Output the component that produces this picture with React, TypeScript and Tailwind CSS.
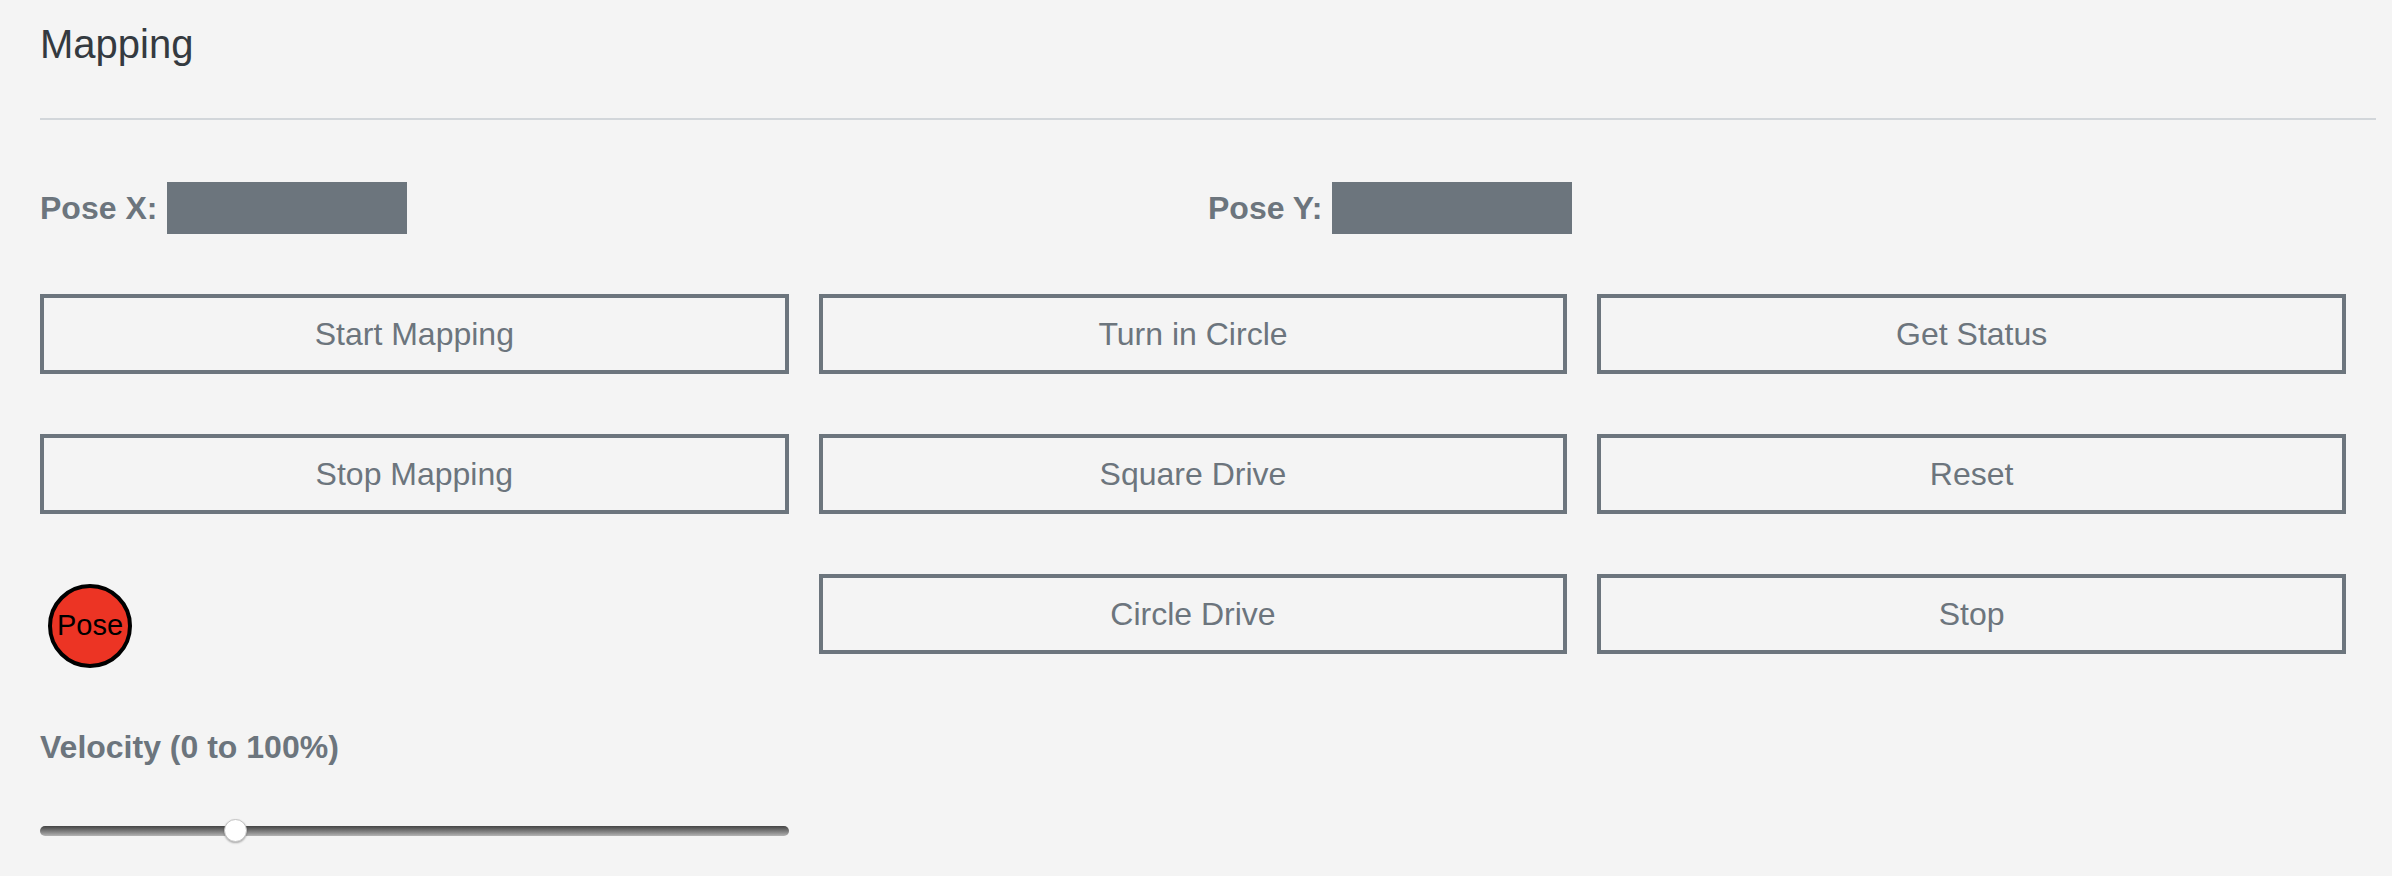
import { useState } from 'react'

const font = { fontFamily: '"Liberation Sans", Arial, sans-serif' }

function ActionButton({ label }: { label: string }) {
  return (
    <button className="mr-[30px] h-[80px] border-4 border-[#6c757d] bg-transparent text-[32px] text-[#6c757d]">
      {label}
    </button>
  )
}

function PoseField({ label }: { label: string }) {
  return (
    <div className="flex items-center">
      <span className="text-[32px] font-bold leading-[38px] text-[#6c757d]">{label}</span>
      <div className="ml-[10px] h-[52px] w-[240px] bg-[#6c757d]" />
    </div>
  )
}

function VelocitySlider({ value }: { value: number }) {
  const pct = value / 100
  return (
    <div className="relative mt-[53px] h-[24px] w-full">
      <div className="absolute left-0 right-0 top-[7px] h-[10px] rounded-full bg-gradient-to-b from-[#444444] to-[#b4b4b4]" />
      <div
        className="absolute top-0 h-[23px] w-[23px] rounded-full border border-[#c4c4c4] bg-white shadow-[0_1px_2px_rgba(0,0,0,0.3)]"
        style={{ left: `calc((100% - 23px) * ${pct})` }}
      />
    </div>
  )
}

export default function App() {
  const [velocity] = useState(25.3)

  return (
    <div className="min-h-screen bg-[#f4f4f4] pl-[40px] pr-[16px] pt-[20px]" style={font}>
      <h1 className="text-[40px] font-normal leading-[48px] text-[#343a40]">Mapping</h1>
      <hr className="mt-[50px] border-t-2 border-[#d2d6da]" />

      <div className="mt-[62px] grid grid-cols-2">
        <PoseField label="Pose X:" />
        <PoseField label="Pose Y:" />
      </div>

      <div className="mt-[60px] grid grid-cols-3 gap-y-[60px]">
        <ActionButton label="Start Mapping" />
        <ActionButton label="Turn in Circle" />
        <ActionButton label="Get Status" />
        <ActionButton label="Stop Mapping" />
        <ActionButton label="Square Drive" />
        <ActionButton label="Reset" />
        <div className="flex items-start">
          <div className="ml-2 mt-[10px] flex h-[84px] w-[84px] items-center justify-center rounded-full border-4 border-black bg-[#ec3424] text-[29px] text-black">
            Pose
          </div>
        </div>
        <ActionButton label="Circle Drive" />
        <ActionButton label="Stop" />
      </div>

      <div className="grid grid-cols-3">
        <div className="pr-[30px]">
          <div className="mt-[60px] text-[32px] font-bold leading-[38px] text-[#6c757d]">Velocity (0 to 100%)</div>
          <VelocitySlider value={velocity} />
        </div>
      </div>
    </div>
  )
}
